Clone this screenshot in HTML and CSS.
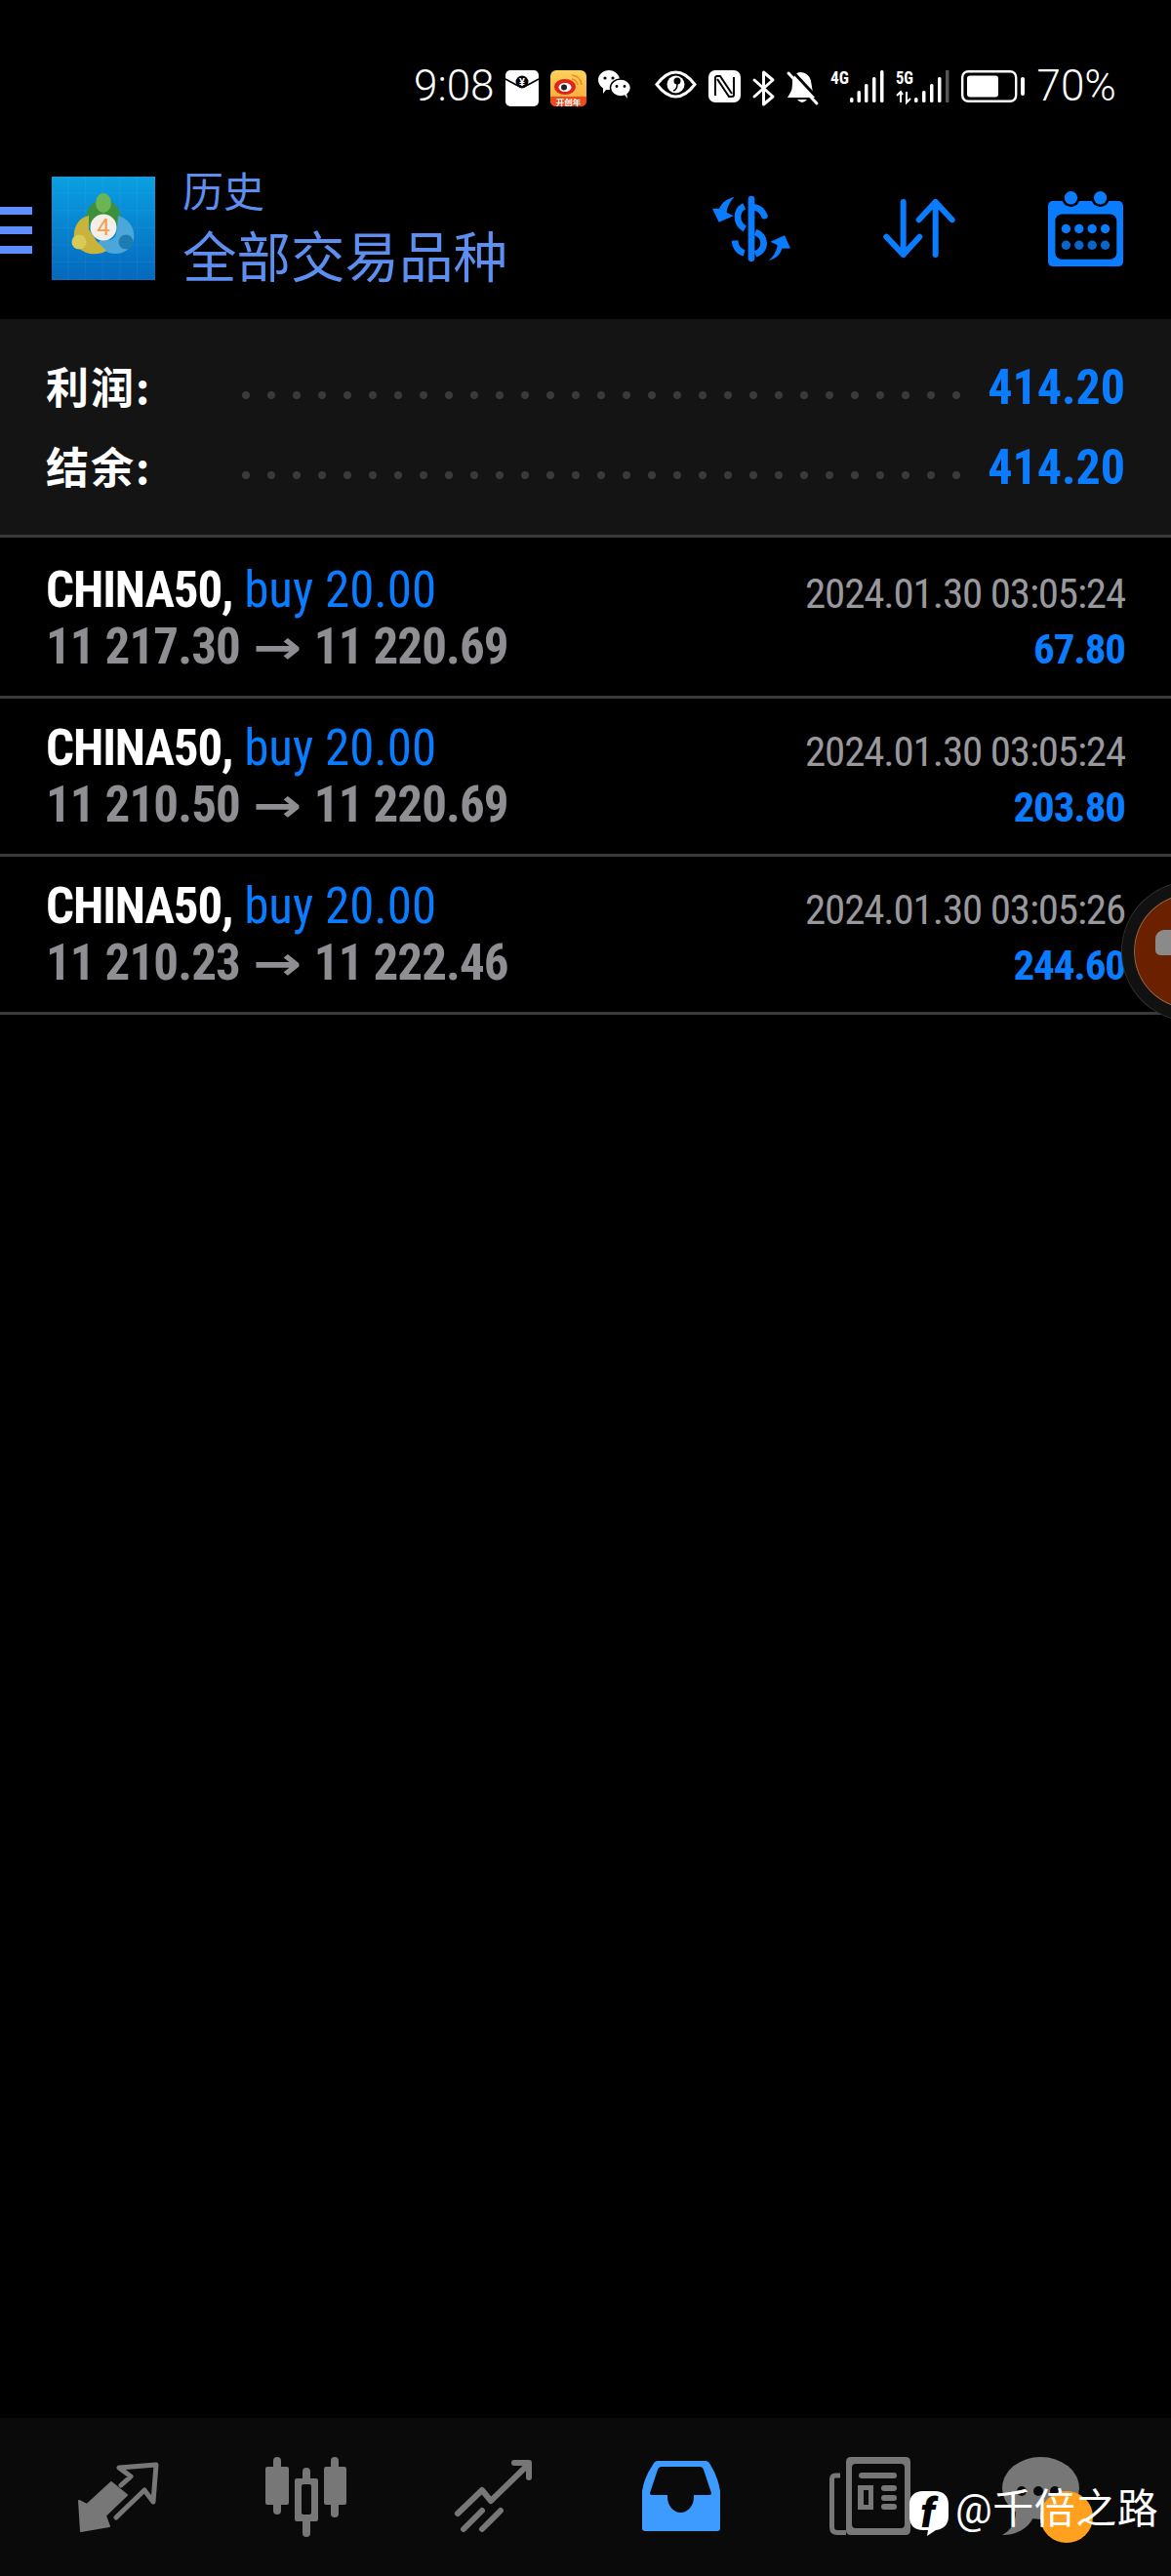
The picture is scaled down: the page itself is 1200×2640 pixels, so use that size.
FILE: index.html
```html
<!DOCTYPE html>
<html lang="zh">
<head>
  <meta charset="UTF-8" />
  <title>历史</title>
  <link rel="stylesheet" href="styles.css">
</head>
<body>
  <div class="app">
    <div class="status-bar">
      <span class="clock">9:08</span>
      <svg width="34" height="37" viewBox="0 0 34 37"><rect width="34" height="37" rx="5" fill="#fff"/><path d="M0 9 L11 15 Q17 18 23 15 L34 9" fill="none" stroke="#000" stroke-width="1.6"/><circle cx="17" cy="12" r="6.5" fill="#000"/><text x="17" y="16" class="yen">¥</text></svg>
      <svg width="37" height="37" viewBox="0 0 37 37"><defs><linearGradient id="wb" x1="0" y1="0" x2="0" y2="1"><stop offset="0" stop-color="#fcd25a"/><stop offset="1" stop-color="#f9a534"/></linearGradient></defs><rect width="37" height="37" rx="6" fill="url(#wb)"/><path d="M0 27 H37 V31 Q37 37 31 37 H6 Q0 37 0 31 Z" fill="#ee4a1a"/><ellipse cx="15" cy="17" rx="11" ry="8" fill="#e0241c"/><ellipse cx="15" cy="17.500" rx="6.500" ry="4.500" fill="#fff"/><circle cx="14" cy="17.500" r="3" fill="#222"/><path d="M22 5 Q31 6 32 15 M22 9 Q27 10 28 15" fill="none" stroke="#ee8a2a" stroke-width="1.600"/><text x="18.500" y="35.500" class="wb-text">开创年</text></svg>
      <svg width="33" height="29" viewBox="0 0 33 29"><path d="M11 0 C17 0 22 4.500 22 10 C22 15.500 17 20 11 20 L8 20 L5 24 L5 18.500 C2 16.500 0 13.500 0 10 C0 4.500 5 0 11 0 Z" fill="#fff"/><ellipse cx="23" cy="18" rx="10.500" ry="9" fill="#fff" stroke="#000" stroke-width="1.500"/><path d="M27 25 L30 29 L29 23 Z" fill="#fff"/><circle cx="7" cy="8" r="1.600" fill="#000"/><circle cx="15" cy="8" r="1.600" fill="#000"/><circle cx="19" cy="16.500" r="1.400" fill="#000"/><circle cx="27" cy="16.500" r="1.400" fill="#000"/></svg>
      <svg class="after-gap" width="43" height="29" viewBox="0 0 43 29"><path d="M2 14.500 C10 4 16 2 21.500 2 C27 2 33 4 41 14.500 C33 25 27 27 21.500 27 C16 27 10 25 2 14.500 Z" fill="none" stroke="#fff" stroke-width="3"/><circle cx="21.500" cy="14.500" r="9" fill="#fff"/><circle cx="23" cy="11" r="3.500" fill="#000"/><path d="M19 21 Q23 20 23 14" fill="none" stroke="#000" stroke-width="1.500"/></svg>
      <svg width="33" height="33" viewBox="0 0 33 33"><rect width="33" height="33" rx="7" fill="#fff"/><path d="M7 26 V8 Q7 6 9 6 H12 L24 24 M26 7 V25 Q26 27 24 27 H21 L9 9" fill="none" stroke="#000" stroke-width="2"/></svg>
      <svg width="23" height="37" viewBox="0 0 23 37"><path d="M2 10 L21 27 L11.500 35 V2 L21 10 L2 27" fill="none" stroke="#fff" stroke-width="3" stroke-linejoin="round" stroke-linecap="round"/></svg>
      <svg width="33" height="36" viewBox="0 0 33 36"><path d="M14 2 C20 2 24 6 25 11 L27 23 L30 28 H1 L5 21 C6 17 6 14 6 11 C7 6 10 2 14 2 Z" fill="#fff"/><path d="M11 30 Q16 36 21 30 Z" fill="#fff"/><path d="M6 1 L34 31" stroke="#000" stroke-width="3"/><path d="M2 3 L31 34" stroke="#fff" stroke-width="3" stroke-linecap="round"/></svg>
      <svg width="55" height="33" viewBox="0 0 55 33"><text x="0" y="14" class="net" textLength="19" lengthAdjust="spacingAndGlyphs">4G</text><g fill="#fff"><rect x="20" y="28" width="3.500" height="5" rx="1.500"/><rect x="27.500" y="21" width="3.500" height="12" rx="1.500"/><rect x="35" y="14" width="3.500" height="19" rx="1.500"/><rect x="43" y="7" width="3.500" height="26" rx="1.500"/><rect x="51" y="0" width="3.500" height="33" rx="1.500"/></g></svg>
      <svg width="55" height="33" viewBox="0 0 55 33"><text x="0" y="14" class="net" textLength="18" lengthAdjust="spacingAndGlyphs">5G</text><path d="M5 33 V22 M1 26 L5 22 L7 25 M11 22 V33 L15 29" fill="none" stroke="#fff" stroke-width="2"/><g fill="#fff"><rect x="19" y="28" width="3.500" height="5" rx="1.500"/><rect x="27" y="21" width="3.500" height="12" rx="1.500"/><rect x="35" y="14" width="3.500" height="19" rx="1.500"/><rect x="43" y="7" width="3.500" height="26" rx="1.500"/></g><rect x="51" y="0" width="3.500" height="33" fill="#555"/></svg>
      <svg width="65" height="33" viewBox="0 0 65 33"><rect x="1.200" y="1.200" width="55" height="30.600" rx="6" fill="none" stroke="#fff" stroke-width="2.400"/><rect x="6" y="5.500" width="32" height="22" rx="3" fill="#fff"/><rect x="61" y="7" width="4" height="19" rx="2" fill="#fff"/></svg>
      <span class="clock">70%</span>
    </div>

    <header class="top-bar">
      <div class="menu-btn"><span></span><span></span><span></span></div>
      <svg class="logo" width="106" height="106" viewBox="0 0 106 106">
        <defs>
          <linearGradient id="lg" x1="0" y1="0" x2="0" y2="1"><stop offset="0" stop-color="#0aa0e2"/><stop offset="1" stop-color="#0468bd"/></linearGradient>
          <pattern id="lgrid" width="17.600" height="17.600" patternUnits="userSpaceOnUse"><path d="M17.600 0 V17.600 H0" fill="none" stroke="#fff" stroke-opacity=".09"/></pattern>
        </defs>
        <rect width="106" height="106" fill="url(#lg)"/>
        <rect width="106" height="106" fill="url(#lgrid)"/>
        <path d="M36 52 C32 34 42 24 53 24 C64 24 74 34 70 52 L60 44 H46 Z" fill="#3e8f3c"/>
        <ellipse cx="53" cy="27" rx="8" ry="10" fill="#6cb553"/>
        <path d="M68 40 C82 44 88 58 82 70 C74 82 58 82 46 70 L52 62 C60 68 66 64 67 54 Z" fill="#4ba6da"/>
        <circle cx="76" cy="67" r="7.500" fill="#1f7cb0"/>
        <path d="M38 40 C26 42 20 56 24 68 C30 80 46 82 56 76 L46 66 L38 54 Z" fill="#c8b43a"/>
        <circle cx="28" cy="67" r="7.500" fill="#d9cb55"/>
        <circle cx="53" cy="52" r="13.500" fill="#f1efe8"/>
        <text x="53" y="60" class="logo-num">4</text>
      </svg>
      <div class="title">
        <div class="title-sub">历史</div>
        <div class="title-main">全部交易品种</div>
      </div>
      <div class="top-icons">
        <svg width="80" height="67" viewBox="150 122 240 200"><g fill="none" stroke="#0a7cff" stroke-width="20" stroke-linecap="round"><path d="M270 131 V313"/><path d="M310 182 C303 165 290 157 278 155"/><path d="M248 152 C222 165 220 205 250 222" stroke-linecap="butt"/><path d="M282 232 C315 245 318 285 282 300" stroke-linecap="butt"/><path d="M219 258 C220 278 232 292 248 296" stroke-linecap="butt"/></g><path d="M218 124 C195 130 178 142 172 160 L150 160 L170 202 L215 182 L194 172 C195 155 205 138 218 124 Z" fill="#0a7cff"/><path d="M322 320 C345 315 360 300 364 283 L390 282 L372 242 L328 262 L350 272 C348 290 338 308 322 320 Z" fill="#0a7cff"/></svg>
        <svg width="74" height="60" viewBox="676 132 220 180"><g fill="none" stroke="#0a7cff" stroke-width="18" stroke-linecap="round" stroke-linejoin="round"><path d="M737 141 V303 M685 248 L737 303 L787 248"/><path d="M836 303 V141 M785 196 L836 141 L887 196"/></g></svg>
        <svg width="77" height="77" viewBox="1182 102 230 230"><rect x="1182" y="132" width="230" height="200" rx="14" fill="#0a7cff"/><rect x="1204" y="172" width="188" height="138" rx="20" fill="#000"/><circle cx="1252" cy="122" r="28" fill="#000"/><circle cx="1342" cy="122" r="28" fill="#000"/><circle cx="1252" cy="122" r="20" fill="#0a7cff"/><circle cx="1342" cy="122" r="20" fill="#0a7cff"/><g fill="#0a7cff"><circle cx="1237" cy="217" r="14"/><circle cx="1277" cy="217" r="14"/><circle cx="1317" cy="217" r="14"/><circle cx="1357" cy="217" r="14"/></g><g fill="#0a66cc"><circle cx="1237" cy="267" r="14"/><circle cx="1277" cy="267" r="14"/><circle cx="1317" cy="267" r="14"/><circle cx="1357" cy="267" r="14"/></g></svg>
      </div>
    </header>

    <section class="summary">
      <div class="summary-row"><span class="summary-label">利润:</span><span class="dots"></span><span class="summary-value narrow">414.20</span></div>
      <div class="summary-row"><span class="summary-label">结余:</span><span class="dots"></span><span class="summary-value narrow">414.20</span></div>
    </section>

    <main class="deals">
      <div class="deal">
        <div class="deal-left">
          <div class="deal-name narrow"><b>CHINA50,</b> <span class="buy">buy 20.00</span></div>
          <div class="deal-price narrow">11 217.30 <span class="arrow">→</span> 11 220.69</div>
        </div>
        <div class="deal-right">
          <div class="deal-date narrow">2024.01.30 03:05:24</div>
          <div class="deal-profit narrow">67.80</div>
        </div>
      </div>
      <div class="deal">
        <div class="deal-left">
          <div class="deal-name narrow"><b>CHINA50,</b> <span class="buy">buy 20.00</span></div>
          <div class="deal-price narrow">11 210.50 <span class="arrow">→</span> 11 220.69</div>
        </div>
        <div class="deal-right">
          <div class="deal-date narrow">2024.01.30 03:05:24</div>
          <div class="deal-profit narrow">203.80</div>
        </div>
      </div>
      <div class="deal">
        <div class="deal-left">
          <div class="deal-name narrow"><b>CHINA50,</b> <span class="buy">buy 20.00</span></div>
          <div class="deal-price narrow">11 210.23 <span class="arrow">→</span> 11 222.46</div>
        </div>
        <div class="deal-right">
          <div class="deal-date narrow">2024.01.30 03:05:26</div>
          <div class="deal-profit narrow">244.60</div>
        </div>
      </div>
    </main>

    <nav class="tab-bar">
      <svg class="tab-quotes" width="81" height="70" viewBox="0 0 81 70"><path d="M33 20 L49 33 L27 54 L31 65 L2 70 L0 39 L8 43 Z" fill="#777" stroke="#777" stroke-width="2" stroke-linejoin="round"/><path d="M43 23 L53 14 L41 5 L79 2 L76 40 L67 28 L38 56" fill="none" stroke="#777" stroke-width="5" stroke-linejoin="round" stroke-linecap="round"/></svg>
      <svg class="tab-chart" width="83" height="82" viewBox="0 0 83 82"><g fill="#777"><rect x="8" y="0" width="8" height="59" rx="4"/><rect x="0" y="10" width="24" height="39" rx="2"/><rect x="38" y="11" width="8" height="71" rx="4"/><rect x="30" y="22" width="24" height="44" rx="2"/><rect x="67" y="0" width="8" height="62" rx="4"/><rect x="60" y="10" width="23" height="39" rx="2"/></g><rect x="37" y="28" width="10" height="31" rx="2" fill="#0a0a0a"/></svg>
      <svg class="tab-trade" width="79" height="74" viewBox="0 0 79 74"><g fill="none" stroke="#777" stroke-width="6" stroke-linecap="round" stroke-linejoin="round"><path d="M3 55 L28 31 L37 42 L74 6"/><path d="M61 3 H76 V18"/><path d="M9 71 L28 52"/><path d="M28 71 L47 52"/></g></svg>
      <svg class="tab-history" width="80" height="73" viewBox="0 0 80 73"><path fill-rule="evenodd" d="M16 1 H65 Q68 1 70 5 Q78 18 80 32 V70 Q80 73 77 73 H3 Q0 73 0 70 V32 Q2 18 11 5 Q13 1 16 1 Z M20 7 Q17 7 16 10 L8 34 Q8 36 10 36 H26 V38 A13.500 16 0 0 0 53 38 V36 H69 Q71 36 71 34 L63 10 Q62 7 59 7 Z" fill="#3d9bff"/></svg>
      <svg class="tab-news" width="83" height="80" viewBox="0 0 83 80"><path fill-rule="evenodd" d="M22 0 H78 Q83 0 83 5 V75 Q83 80 78 80 H22 Q17 80 17 75 V5 Q17 0 22 0 Z M27 7 Q23 7 23 11 V69 Q23 73 27 73 H73 Q77 73 77 69 V11 Q77 7 73 7 Z" fill="#777"/><path d="M11 19 H6 Q2.500 19 2.500 23 V72 Q2.500 77.500 8 77.500 H17" fill="none" stroke="#777" stroke-width="5"/><g fill="#777"><rect x="30" y="16" width="39" height="6" rx="3"/><path fill-rule="evenodd" d="M29 29 H45 V54 H29 Z M35 34 V49 H40 V34 Z"/><rect x="53" y="29" width="16" height="6" rx="3"/><rect x="53" y="39" width="16" height="6" rx="3"/><rect x="53" y="48" width="16" height="6" rx="3"/></g></svg>
      <svg class="tab-chat" width="79" height="80" viewBox="0 0 79 80"><ellipse cx="39.500" cy="32" rx="39.500" ry="32" fill="#777"/><path d="M14 56 C14 68 8 76 0 80 C14 80 26 74 32 62 Z" fill="#777"/><circle cx="20" cy="35" r="5" fill="#0a0a0a"/><circle cx="37" cy="35" r="5" fill="#0a0a0a"/><circle cx="54" cy="35" r="5" fill="#0a0a0a"/></svg>
    </nav>

    <div class="float-ball"><span class="float-mark"></span></div>
    <div class="badge"></div>
    <div class="watermark">
      <svg width="40" height="46" viewBox="0 0 40 46"><path d="M14 0 H26 C35 0 40 5 40 14 V26 C40 34 35 39 27 40 L18 46 L19 40 H14 C5 40 0 35 0 26 V14 C0 5 5 0 14 0 Z" fill="#fff"/><text x="19" y="37" class="wm-f">f</text></svg>
      <span class="wm-text">@千倍之路</span>
    </div>
  </div>
</body>
</html>
```

FILE: styles.css
```css
* { box-sizing: border-box; margin: 0; padding: 0; }
html, body { background: #000; }
body { font-family: Roboto, "Noto Sans CJK SC", sans-serif; color: #fff; }
.app { position: relative; width: 1200px; height: 2640px; overflow: hidden; display: flex; flex-direction: column; background: #000; }
svg { overflow: visible; }

.narrow { font-family: "Roboto Condensed", "Liberation Sans Narrow", Roboto, sans-serif; font-stretch: condensed; }

.status-bar { height: 160px; padding: 70px 0 0 424px; display: flex; align-items: flex-start; gap: 12px; }
.status-bar svg { display: block; flex: none; margin-top: 2px; }
.status-bar .after-gap { margin-left: 13px; }
.clock { font-size: 44px; font-weight: 300; line-height: 37px; }
.yen { font: bold 11px Roboto, sans-serif; fill: #fff; text-anchor: middle; }
.wb-text { font: bold 8.500px "Noto Sans CJK SC", sans-serif; fill: #fff; text-anchor: middle; }
.net { font: bold 19px Roboto, sans-serif; font-stretch: condensed; fill: #fff; }

.top-bar { height: 167px; padding-bottom: 19px; display: flex; align-items: center; }
.menu-btn { width: 33px; margin-top: 4px; display: flex; flex-direction: column; gap: 12px; }
.menu-btn span { height: 8px; background: #5f8fff; }
.logo { margin-left: 20px; flex: none; }
.logo-num { font: 24px Roboto, sans-serif; fill: #f0a050; text-anchor: middle; }
.title { margin: 0 0 3px 28px; color: #5c8fef; font-family: "Noto Sans CJK SC", sans-serif; }
.title-sub { font-size: 42px; line-height: 44px; margin-bottom: 11px; }
.title-main { font-size: 55.500px; line-height: 66px; }
.top-icons { margin-left: auto; padding-right: 49px; display: flex; align-items: center; gap: 95px; }

.summary { height: 224px; background: #141414; border-bottom: 3px solid #3a3a3a; padding: 27px 47px 0; }
.summary-row { height: 82px; display: flex; align-items: center; }
.summary-label { width: 192px; font-size: 44px; letter-spacing: 2px; font-weight: 700; font-family: "Noto Sans CJK SC", sans-serif; }
.dots { width: 754px; height: 8px; margin-top: 20px; background: radial-gradient(circle, #3a3a3a 3.500px, transparent 4.500px) 0 0 / 26px 8px repeat-x; }
.summary-value { margin: 4px 0 0 auto; font-size: 50px; font-weight: 700; color: #0a7cff; }

.deals { padding-top: 3px; }
.deal { height: 162px; padding: 0 47px; border-bottom: 3px solid #3a3a3a; display: flex; justify-content: space-between; }
.deal-left { padding-top: 22px; }
.deal-name { font-size: 51px; line-height: 58px; }
.deal-name b { font-weight: 700; letter-spacing: -1.100px; }
.buy { color: #0a7cff; letter-spacing: 0; }
.deal-price { font-size: 51px; line-height: 58px; font-weight: 700; color: #8e8e93; letter-spacing: -0.900px; }
.arrow { display: inline-block; font-family: "DejaVu Sans", sans-serif; font-stretch: normal; font-size: 48px; line-height: 40px; letter-spacing: 0; margin: 0 7px; transform: scaleX(1.25); }
.deal-right { padding-top: 28px; text-align: right; }
.deal-date { font-size: 43px; line-height: 52px; color: #98989d; letter-spacing: -1.150px; }
.deal-profit { font-size: 43px; line-height: 52px; margin-top: 5px; font-weight: 700; color: #0a7cff; letter-spacing: -1.100px; }

.tab-bar { margin-top: auto; height: 162px; background: #0a0a0a; position: relative; display: flex; align-items: flex-start; padding: 40px 0 0 81px; }
.tab-bar svg { display: block; flex: none; }
.tab-quotes { margin: 6px 0 0 0; }
.tab-chart { margin: 0 0 0 110px; }
.tab-trade { margin: 3px 0 0 111px; }
.tab-history { margin: 3px 0 0 113px; }
.tab-news { margin: 0 0 0 112px; }
.tab-chat { margin: 0 0 0 94px; }

.float-ball { position: absolute; left: 1150px; top: 904px; width: 142px; height: 142px; border-radius: 50%; background: #6b2000; border: 12px solid #111; box-shadow: 0 0 0 1px #333, inset 0 0 0 1px #8a6a50; }
.float-mark { position: absolute; left: 22px; top: 37px; width: 17px; height: 26px; background: #8a8a8a; border-radius: 9px 1px 0 5px; }
.badge { position: absolute; left: 1066px; top: 2553px; width: 54px; height: 53px; border-radius: 50%; background: #ffa01e; }
.watermark { position: absolute; left: 932px; top: 2550px; display: flex; align-items: flex-start; gap: 7px; }
.watermark svg { margin-top: 3px; }
.wm-f { font: italic 900 42px Roboto, sans-serif; fill: #000; text-anchor: middle; }
.wm-text { font-family: Roboto, "Noto Sans CJK SC", sans-serif; font-size: 42px; line-height: 44px; letter-spacing: 0.500px; }
```
